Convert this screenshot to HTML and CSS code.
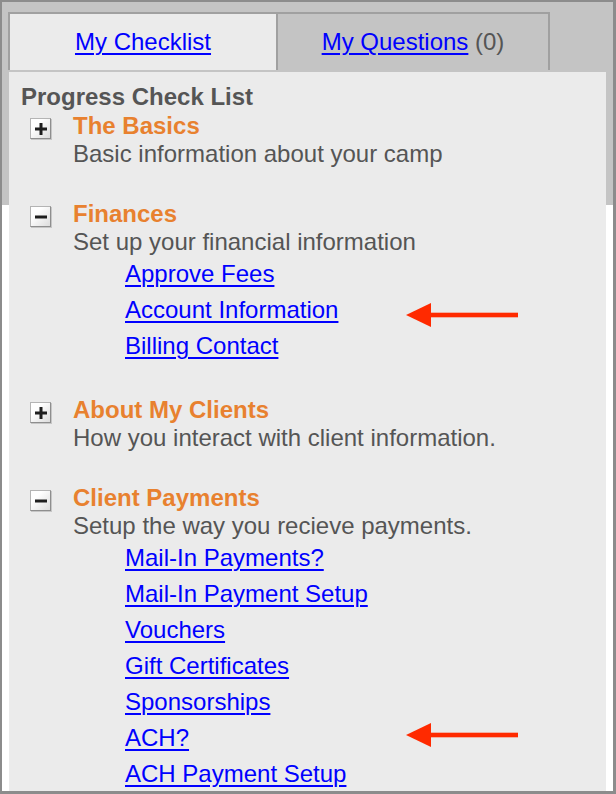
FILE: index.html
```html
<!DOCTYPE html>
<html lang="en">
<head>
    <meta charset="UTF-8">
    <meta name="viewport" content="width=device-width, initial-scale=1.0">
    <title>Progress Check List</title>
    <link rel="stylesheet" href="styles.css">
</head>
<body>
    <div class="frame">
        <div class="tabs">
            <div class="tab active"><span><a href="#">My Checklist</a></span></div>
            <div class="tab"><span><a href="#">My Questions</a> (0)</span></div>
        </div>
        <div class="panel">
            <h1>Progress Check List</h1>

            <div class="section">
                <span class="toggle">
                    <svg width="12" height="12" viewBox="0 0 12 12"><rect x="0" y="4.5" width="12" height="3" fill="#1e1e1e"/><rect x="4.5" y="0" width="3" height="12" fill="#1e1e1e"/></svg>
                </span>
                <div class="body">
                    <div class="title">The Basics</div>
                    <div class="desc">Basic information about your camp</div>
                </div>
            </div>

            <div class="section">
                <span class="toggle">
                    <svg width="12" height="12" viewBox="0 0 12 12"><rect x="0" y="4.5" width="12" height="3" fill="#1e1e1e"/></svg>
                </span>
                <div class="body">
                    <div class="title">Finances</div>
                    <div class="desc">Set up your financial information</div>
                    <ul class="links">
                        <li><a href="#">Approve Fees</a></li>
                        <li><a href="#">Account Information</a>
                            <svg class="arrow arrow-a" width="114" height="26" viewBox="0 0 114 26"><polygon points="0,13 25,1 25,25" fill="#ff2a00"/><rect x="24" y="10.7" width="88" height="4.6" fill="#ff2a00"/></svg>
                        </li>
                        <li><a href="#">Billing Contact</a></li>
                    </ul>
                </div>
            </div>

            <div class="section">
                <span class="toggle">
                    <svg width="12" height="12" viewBox="0 0 12 12"><rect x="0" y="4.5" width="12" height="3" fill="#1e1e1e"/><rect x="4.5" y="0" width="3" height="12" fill="#1e1e1e"/></svg>
                </span>
                <div class="body">
                    <div class="title">About My Clients</div>
                    <div class="desc">How you interact with client information.</div>
                </div>
            </div>

            <div class="section">
                <span class="toggle">
                    <svg width="12" height="12" viewBox="0 0 12 12"><rect x="0" y="4.5" width="12" height="3" fill="#1e1e1e"/></svg>
                </span>
                <div class="body">
                    <div class="title">Client Payments</div>
                    <div class="desc">Setup the way you recieve payments.</div>
                    <ul class="links">
                        <li><a href="#">Mail-In Payments?</a></li>
                        <li><a href="#">Mail-In Payment Setup</a></li>
                        <li><a href="#">Vouchers</a></li>
                        <li><a href="#">Gift Certificates</a></li>
                        <li><a href="#">Sponsorships</a></li>
                        <li><a href="#">ACH?</a>
                            <svg class="arrow arrow-b" width="114" height="26" viewBox="0 0 114 26"><polygon points="0,13 25,1 25,25" fill="#ff2a00"/><rect x="24" y="10.7" width="88" height="4.6" fill="#ff2a00"/></svg>
                        </li>
                        <li><a href="#">ACH Payment Setup</a></li>
                    </ul>
                </div>
            </div>
        </div>
    </div>
</body>
</html>
```

FILE: styles.css
```css
body {
    margin: 0;
    padding: 0;
    background-color: #fff;
    font-family: "Liberation Sans", Arial, sans-serif;
}
.frame {
    box-sizing: border-box;
    width: 616px;
    height: 794px;
    overflow: hidden;
    border-style: solid;
    border-color: #8c8c8c;
    border-width: 2px 3px 3px 2px;
    padding: 10px 7px 0 6px;
    background: linear-gradient(to bottom, #c4c4c4 203px, #fff 203px);
}
.tabs {
    display: flex;
    height: 58px;
    margin-bottom: 2px;
}
.tab {
    box-sizing: border-box;
    height: 58px;
    border: 2px solid #a0a0a0;
    border-bottom: none;
    display: flex;
    justify-content: center;
    align-items: center;
    font-size: 24px;
    color: #555;
    background-color: #c4c4c4;
}
.tab:first-child {
    width: 270px;
}
.tab:last-child {
    width: 272px;
    border-left: none;
}
.tab.active {
    background-color: #ebebeb;
}
.tab a, .links a {
    color: #0000ff;
    text-decoration: underline;
    text-decoration-thickness: 2px;
    text-underline-offset: 3px;
}
.panel {
    height: 100%;
    margin-left: 1px;
    padding: 11px 0 0 12px;
    background-color: #ebebeb;
    color: #555;
    font-size: 24px;
}
h1 {
    margin: 0 0 1px;
    font-size: 24px;
    line-height: 28px;
    font-weight: bold;
    color: #555;
}
.section {
    display: flex;
    margin-bottom: 32px;
}
.toggle {
    box-sizing: border-box;
    width: 21px;
    height: 21px;
    margin: 6px 22px 0 9px;
    flex-shrink: 0;
    display: flex;
    justify-content: center;
    align-items: center;
    border: 1px solid #b4b4b4;
    border-right-color: #8e8e8e;
    border-bottom-color: #8e8e8e;
    background: linear-gradient(135deg, #fff 30%, #dcdcdc 100%);
    box-shadow: 1px 1px 0 #c6c6c6;
}
.title {
    line-height: 28px;
    font-weight: bold;
    color: #e8812f;
}
.desc {
    line-height: 28px;
}
.links {
    list-style: none;
    margin: 0;
    padding: 0 0 0 52px;
}
.links li {
    position: relative;
    line-height: 36px;
}
.arrow {
    position: absolute;
    left: 281px;
}
.arrow-a {
    top: 10px;
}
.arrow-b {
    top: 2px;
}
```
